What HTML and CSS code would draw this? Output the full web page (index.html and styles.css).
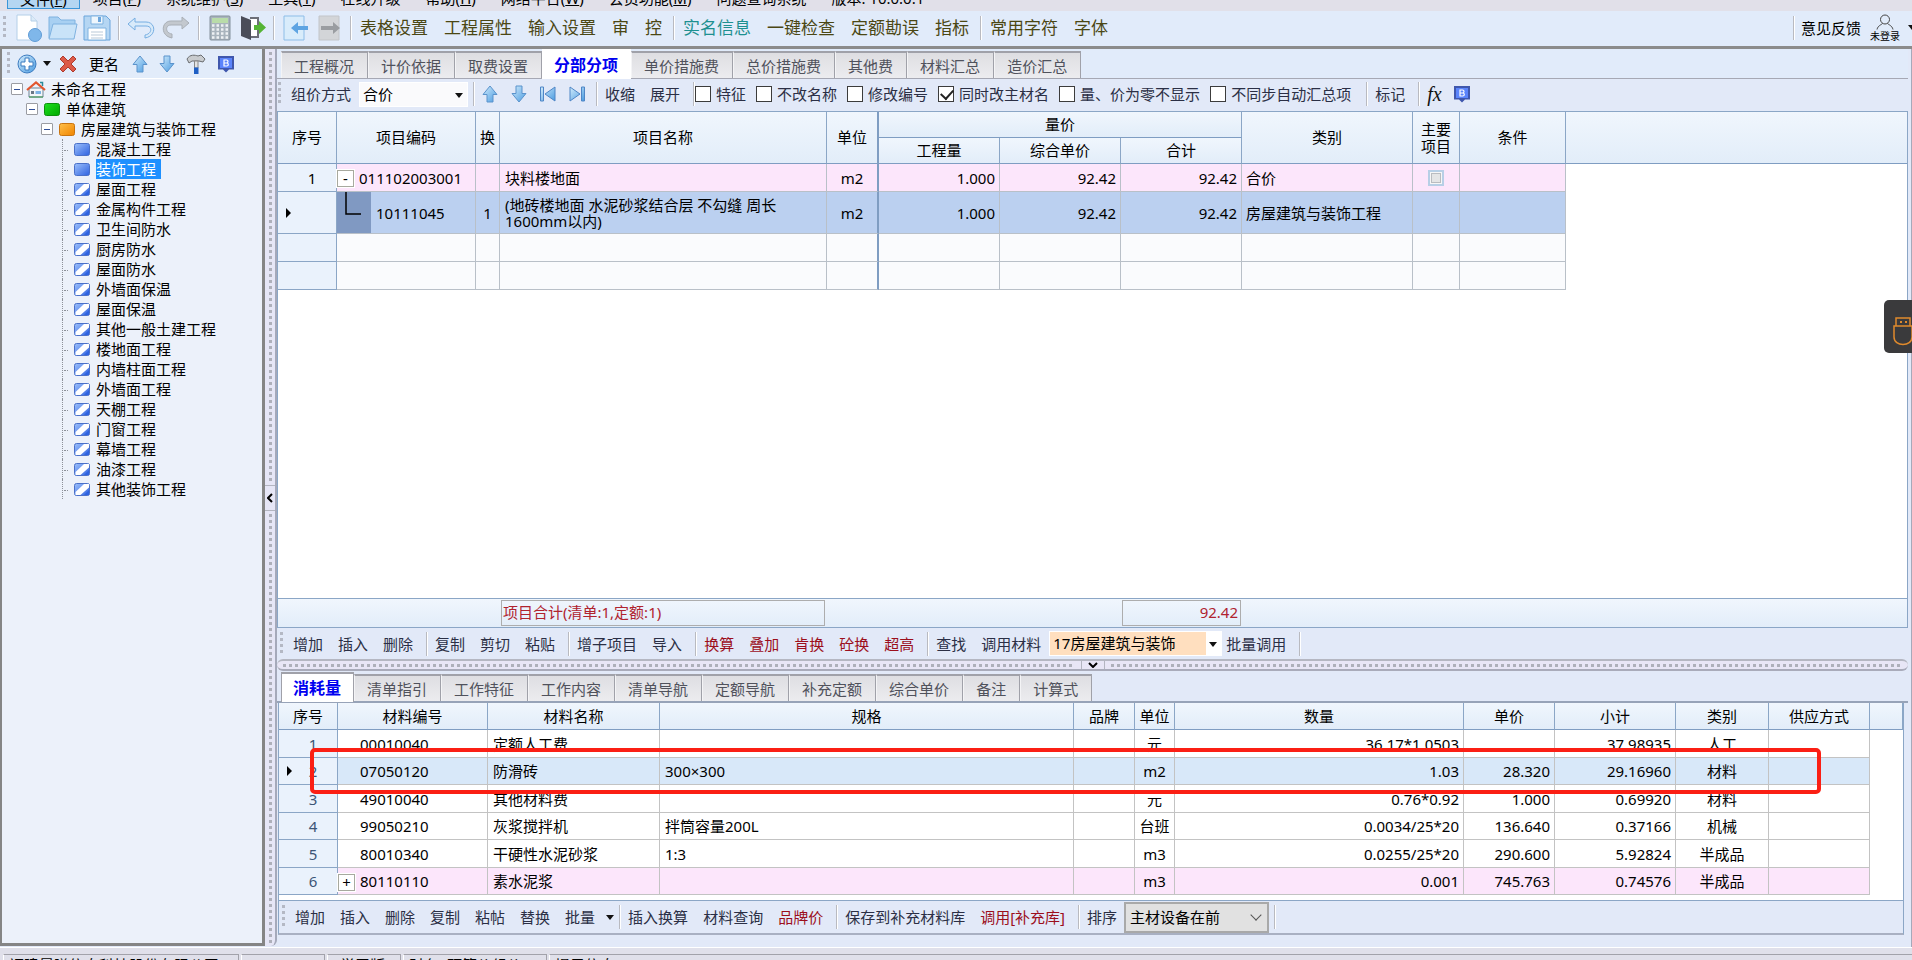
FILE: index.html
```html
<!DOCTYPE html>
<html lang="zh-CN">
<head>
<meta charset="utf-8">
<title>工程计价</title>
<link rel="stylesheet" href="styles.css">
</head>
<body>
<svg class="defs" aria-hidden="true">
  <defs>
    <linearGradient id="gBlue" x1="0" y1="0" x2="1" y2="1"><stop offset="0" stop-color="#d3ecfc"/><stop offset="1" stop-color="#4a9be0"/></linearGradient>
    <linearGradient id="gLeaf" x1="0" y1="0" x2="1" y2="1"><stop offset="0" stop-color="#9cc0fb"/><stop offset="1" stop-color="#2f62e0"/></linearGradient>
    <linearGradient id="gOrange" x1="0" y1="0" x2="1" y2="1"><stop offset="0" stop-color="#ffc04a"/><stop offset="1" stop-color="#f08400"/></linearGradient>
    <linearGradient id="gGreen" x1="0" y1="0" x2="1" y2="1"><stop offset="0" stop-color="#1fe01f"/><stop offset="1" stop-color="#00a800"/></linearGradient>
    <symbol id="up" viewBox="0 0 16 18"><path d="M8 1 15 9.500H11V17H5V9.500H1Z" fill="url(#gBlue)" stroke="#5b93cc"/></symbol>
    <symbol id="down" viewBox="0 0 16 18"><path d="M8 17 15 8.500H11V1H5V8.500H1Z" fill="url(#gBlue)" stroke="#5b93cc"/></symbol>
    <symbol id="first" viewBox="0 0 18 16"><path d="M1.500 1H4.500V15H1.500ZM16 1V15L6 8Z" fill="url(#gBlue)" stroke="#4f86c6"/></symbol>
    <symbol id="last" viewBox="0 0 18 16"><path d="M16.500 1H13.500V15H16.500ZM2 1V15L12 8Z" fill="url(#gBlue)" stroke="#4f86c6"/></symbol>
    <symbol id="badge" viewBox="0 0 18 18"><path d="M1 1H17V14.500H12L9 17.500 6 14.500H1Z" fill="#3f57ad"/><path d="M3 3H15V13H3Z" fill="#5b84fb"/><path d="M7 4.500V11.500M7 5H9.500a1.500 1.500 0 0 1 0 3H7M7 8H9.800a1.500 1.500 0 0 1 0 3H7" fill="none" stroke="#fff" stroke-width="1.200"/></symbol>
    <symbol id="leaf" viewBox="0 0 16 13"><rect x=".5" y=".5" width="15" height="12" rx="2" fill="url(#gLeaf)" stroke="#4a70c8"/></symbol>
    <symbol id="leafHalf" viewBox="0 0 16 13"><rect x=".5" y=".5" width="15" height="12" rx="2" fill="url(#gLeaf)" stroke="#4a70c8"/><path d="M10 1H15V4.500L6.500 12H1.500V9Z" fill="#fff"/><path d="M10 12 15 7V12Z" fill="#2f62e0"/></symbol>
  </defs>
</svg>

<nav class="menubar">
  <button class="menu menu-on">文件(<u>F</u>)</button>
  <button class="menu">项目(<u>P</u>)</button>
  <button class="menu">系统维护(<u>S</u>)</button>
  <button class="menu">工具(<u>T</u>)</button>
  <button class="menu">在线升级</button>
  <button class="menu">帮助(<u>H</u>)</button>
  <button class="menu">网络平台(<u>W</u>)</button>
  <button class="menu">会员功能(<u>M</u>)</button>
  <button class="menu">问题查询系统</button>
  <span class="menu">版本: 10.0.0.1</span>
</nav>

<header class="mainbar">
  <i class="grip"></i>
  <button class="ico" aria-label="新建"><svg width="28" height="30" viewBox="0 0 28 30"><path d="M2 2H16L22 8V27H2Z" fill="#fff" stroke="#b4cfe8"/><path d="M16 2V8H22" fill="#dcebf8" stroke="#b4cfe8"/><circle cx="20" cy="22" r="6.500" fill="#7fb7ea" stroke="#5f9bd6"/></svg></button>
  <button class="ico" aria-label="打开"><svg width="30" height="26" viewBox="0 0 30 26"><path d="M1 23V2H10L13 5H27V9" fill="#a8d0f2" stroke="#7fb2e0"/><path d="M1 24 5 9H29L26 24Z" fill="#c9e3f8" stroke="#7fb2e0"/></svg></button>
  <button class="ico" aria-label="保存"><svg width="28" height="26" viewBox="0 0 28 26"><path d="M1 1H23L27 5V25H1Z" fill="#b5d6f3" stroke="#6ba5dc"/><path d="M8 1H20V9H8Z" fill="#eef6fd" stroke="#7fb2e0"/><path d="M15 2H18V7H15Z" fill="#6ba5dc"/><path d="M5 13H23V25H5Z" fill="#fff" stroke="#7fb2e0"/><path d="M8 17H20M8 20H20M8 23H20" stroke="#b9c9d8"/></svg></button>
  <i class="sep"></i>
  <button class="ico" aria-label="撤销"><svg width="30" height="24" viewBox="0 0 30 24"><path d="M9 2 2 8 9 14V10H20C27 10 26 18 19 19V22C31 20 30 6 20 6H9Z" fill="#d8eafa" stroke="#76aee2"/></svg></button>
  <button class="ico" aria-label="重做"><svg width="30" height="24" viewBox="0 0 30 24"><path d="M21 1 28 7 21 13V9H10C4 9 4 17 11 18V22C-1 20 0 5 10 5H21Z" fill="#c3c8ce" stroke="#a9afb6"/></svg></button>
  <i class="sep"></i>
  <button class="ico narrow" aria-label="计算器"><svg width="22" height="26" viewBox="0 0 22 26"><rect x="1" y="1" width="20" height="24" rx="1" fill="#a9b4bd" stroke="#84919c"/><path d="M3 3H19V8H3Z" fill="#b9dca9"/><path d="M3 10.500H19M3 14.500H19M3 18.500H19M3 22.500H19" stroke="#eef1f4" stroke-width="2.500" stroke-dasharray="2.500 2"/></svg></button>
  <button class="ico narrow" aria-label="退出"><svg width="26" height="26" viewBox="0 0 26 26"><path d="M10 3H18V22H10" fill="#fff" stroke="#6c6f78" stroke-width="2"/><path d="M1 1 11 5V25L1 21Z" fill="#4a4d59"/><path d="M14 10H19V6L26 12.500 19 19V15H14Z" fill="#55b435"/></svg></button>
  <i class="sep"></i>
  <button class="ico doc" aria-label="导入"><svg width="26" height="26" viewBox="0 0 26 26"><path d="M1 1H21V25H1Z" fill="#d9ecfb" stroke="#8dbde8"/><path d="M25 11V15H15V19L8 13 15 7V11Z" fill="#5ea4e2"/></svg></button>
  <button class="ico doc" aria-label="导出"><svg width="24" height="26" viewBox="0 0 24 26"><path d="M1 1H21V25H1Z" fill="#d3d5d8" stroke="#c2c5c9"/><path d="M3 11V15H15V19L22 13 15 7V11Z" fill="#9a9da1"/></svg></button>
  <i class="sep"></i>
  <button class="big">表格设置</button><button class="big">工程属性</button><button class="big">输入设置</button><button class="big">审</button><button class="big">控</button>
  <i class="sep"></i>
  <button class="big teal">实名信息</button><button class="big">一键检查</button><button class="big">定额勘误</button><button class="big">指标</button>
  <i class="sep"></i>
  <button class="big">常用字符</button><button class="big">字体</button>
  <span class="spring"></span>
  <i class="sep"></i>
  <button class="btn dark">意见反馈</button>
  <button class="user"><svg width="18" height="16" viewBox="0 0 18 16"><circle cx="9" cy="5.500" r="4.500" fill="none" stroke="#444"/><path d="M1 15.500C2 11.500 5 11 6.500 9.500M17 15.500C16 11.500 13 11 11.500 9.500" fill="none" stroke="#444"/></svg><span>未登录</span></button>
  <i class="tri"></i>
</header>

<main class="work">
  <aside class="side">
    <div class="sidebar-tools">
      <i class="grip"></i>
      <button class="pic" aria-label="添加"><svg width="20" height="20" viewBox="0 0 20 20"><circle cx="10" cy="10" r="9" fill="url(#gBlue)" stroke="#3d7cc0"/><path d="M8 4H12V8H16V12H12V16H8V12H4V8H8Z" fill="#fff" stroke="#3d7cc0"/></svg></button>
      <i class="tri"></i>
      <button class="pic" aria-label="删除"><svg width="18" height="18" viewBox="0 0 18 18"><path d="M4 1 9 6 14 1 17 4 12 9 17 14 14 17 9 12 4 17 1 14 6 9 1 4Z" fill="#dc5a48" stroke="#b03a2c"/></svg></button>
      <button class="btn dark">更名</button>
      <button class="pic" aria-label="上移"><svg width="16" height="18"><use href="#up"/></svg></button>
      <button class="pic" aria-label="下移"><svg width="16" height="18"><use href="#down"/></svg></button>
      <button class="pic" aria-label="工具"><svg width="20" height="20" viewBox="0 0 20 20"><path d="M1 5C4 0 9 1 12 2L15 1 19 5 17 8 13 7H6L3 9Z" fill="#c9cccf" stroke="#6a6d70"/><path d="M8.500 7H12V14H8.500Z" fill="#e3e3e3" stroke="#888"/><path d="M8 13.500H12.500V20H8Z" fill="#1f5fc4"/></svg></button>
      <button class="pic" aria-label="标注"><svg width="18" height="18"><use href="#badge"/></svg></button>
    </div>
    <ul class="tree">
      <li class="d0"><button class="twist" aria-label="折叠"></button><svg width="20" height="17" viewBox="0 0 20 17"><path d="M3 7H17V16H3Z" fill="#f4f6f8" stroke="#6a8396"/><path d="M1 9 10 1.500 19 9" fill="none" stroke="#e2552e" stroke-width="2.200"/><path d="M14 1.500H16.500V5" stroke="#2a8a9a" stroke-width="1.500" fill="none"/><path d="M5 10H8V13H5Z" fill="#6a7784"/><path d="M9.500 10H15V13H9.500Z" fill="#7db3e4"/><path d="M3 16H17" stroke="#3c9a4a"/></svg><span>未命名工程</span></li>
      <li class="d1"><button class="twist" aria-label="折叠"></button><svg width="16" height="13" viewBox="0 0 16 13"><rect x=".5" y=".5" width="15" height="12" rx="2" fill="url(#gGreen)" stroke="#0c8f0c"/></svg><span>单体建筑</span></li>
      <li class="d2"><button class="twist" aria-label="折叠"></button><svg width="16" height="13" viewBox="0 0 16 13"><rect x=".5" y=".5" width="15" height="12" rx="2" fill="url(#gOrange)" stroke="#c87410"/></svg><span>房屋建筑与装饰工程</span></li>
      <li class="d3"><svg width="16" height="13"><use href="#leaf"/></svg><span>混凝土工程</span></li>
      <li class="d3 picked"><svg width="16" height="13"><use href="#leaf"/></svg><span>装饰工程</span></li>
      <li class="d3"><svg width="16" height="13"><use href="#leafHalf"/></svg><span>屋面工程</span></li>
      <li class="d3"><svg width="16" height="13"><use href="#leafHalf"/></svg><span>金属构件工程</span></li>
      <li class="d3"><svg width="16" height="13"><use href="#leafHalf"/></svg><span>卫生间防水</span></li>
      <li class="d3"><svg width="16" height="13"><use href="#leafHalf"/></svg><span>厨房防水</span></li>
      <li class="d3"><svg width="16" height="13"><use href="#leafHalf"/></svg><span>屋面防水</span></li>
      <li class="d3"><svg width="16" height="13"><use href="#leafHalf"/></svg><span>外墙面保温</span></li>
      <li class="d3"><svg width="16" height="13"><use href="#leafHalf"/></svg><span>屋面保温</span></li>
      <li class="d3"><svg width="16" height="13"><use href="#leafHalf"/></svg><span>其他一般土建工程</span></li>
      <li class="d3"><svg width="16" height="13"><use href="#leafHalf"/></svg><span>楼地面工程</span></li>
      <li class="d3"><svg width="16" height="13"><use href="#leafHalf"/></svg><span>内墙柱面工程</span></li>
      <li class="d3"><svg width="16" height="13"><use href="#leafHalf"/></svg><span>外墙面工程</span></li>
      <li class="d3"><svg width="16" height="13"><use href="#leafHalf"/></svg><span>天棚工程</span></li>
      <li class="d3"><svg width="16" height="13"><use href="#leafHalf"/></svg><span>门窗工程</span></li>
      <li class="d3"><svg width="16" height="13"><use href="#leafHalf"/></svg><span>幕墙工程</span></li>
      <li class="d3"><svg width="16" height="13"><use href="#leafHalf"/></svg><span>油漆工程</span></li>
      <li class="d3"><svg width="16" height="13"><use href="#leafHalf"/></svg><span>其他装饰工程</span></li>
    </ul>
  </aside>

  <div class="vsplit">
    <i class="vdots"></i>
    <button class="vhandle" aria-label="收起"><svg width="6" height="10" viewBox="0 0 6 10"><path d="M5 1 1 5 5 9" fill="none" stroke="#000" stroke-width="2"/></svg></button>
    <i class="vdots"></i>
  </div>

  <section class="content">
    <nav class="tabs">
      <button class="tab">工程概况</button><button class="tab">计价依据</button><button class="tab">取费设置</button><button class="tab tab-on">分部分项</button><button class="tab">单价措施费</button><button class="tab">总价措施费</button><button class="tab">其他费</button><button class="tab">材料汇总</button><button class="tab">造价汇总</button>
    </nav>

    <div class="bar bar-top">
      <i class="grip"></i>
      <label class="lbl" for="mode">组价方式</label>
      <span class="combo combo-mode"><select id="mode"><option>合价</option></select></span>
      <i class="sep"></i>
      <button class="nav" aria-label="上移"><svg width="16" height="18"><use href="#up"/></svg></button>
      <button class="nav" aria-label="下移"><svg width="16" height="18"><use href="#down"/></svg></button>
      <button class="nav" aria-label="首条"><svg width="18" height="16"><use href="#first"/></svg></button>
      <button class="nav" aria-label="末条"><svg width="18" height="16"><use href="#last"/></svg></button>
      <i class="sep"></i>
      <button class="btn">收缩</button><button class="btn">展开</button>
      <i class="sep"></i>
      <label class="chk"><input type="checkbox">特征</label>
      <label class="chk"><input type="checkbox">不改名称</label>
      <label class="chk"><input type="checkbox">修改编号</label>
      <label class="chk"><input type="checkbox" checked>同时改主材名</label>
      <label class="chk"><input type="checkbox">量、价为零不显示</label>
      <label class="chk"><input type="checkbox">不同步自动汇总项</label>
      <i class="sep"></i>
      <button class="btn">标记</button>
      <i class="sep"></i>
      <button class="fx"><i>fx</i></button>
      <button class="pic" aria-label="标注"><svg width="18" height="18"><use href="#badge"/></svg></button>
    </div>

    <div class="sheet">
      <table class="grid items">
        <colgroup><col class="w59"><col class="w139"><col class="w24"><col class="w327"><col class="w52"><col class="w121"><col class="w121"><col class="w121"><col class="w171"><col class="w47"><col class="w106"><col></colgroup>
        <thead>
          <tr><th rowspan="2">序号</th><th rowspan="2">项目编码</th><th rowspan="2">换</th><th rowspan="2">项目名称</th><th rowspan="2" class="thick">单位</th><th colspan="3">量价</th><th rowspan="2">类别</th><th rowspan="2">主要<br>项目</th><th rowspan="2">条件</th><th rowspan="2" class="last"></th></tr>
          <tr><th>工程量</th><th>综合单价</th><th>合计</th></tr>
        </thead>
        <tbody>
          <tr class="pink"><td class="no">1</td><td class="code"><button class="pm">-</button>011102003001</td><td></td><td>块料楼地面</td><td class="mid thick">m2</td><td class="num">1.000</td><td class="num">92.42</td><td class="num">92.42</td><td class="tight">合价</td><td class="mid"><input type="checkbox" class="flat" aria-label="主要项目"></td><td></td><td class="fill"></td></tr>
          <tr class="sel"><td class="no"><i class="cur"></i></td><td class="code child"><i class="elbow"><svg width="34" height="41" viewBox="0 0 34 41"><path d="M9 0V22H24" fill="none" stroke="#000" stroke-width="1.500"/></svg></i>10111045</td><td class="mid">1</td><td class="wrap">(地砖楼地面 水泥砂浆结合层 不勾缝 周长1600mm以内)</td><td class="mid thick">m2</td><td class="num">1.000</td><td class="num">92.42</td><td class="num">92.42</td><td class="tight">房屋建筑与装饰工程</td><td></td><td></td><td class="fill"></td></tr>
          <tr><td class="no"></td><td></td><td></td><td></td><td class="thick"></td><td></td><td></td><td></td><td></td><td></td><td></td><td class="fill"></td></tr>
          <tr><td class="no"></td><td></td><td></td><td></td><td class="thick"></td><td></td><td></td><td></td><td></td><td></td><td></td><td class="fill"></td></tr>
        </tbody>
      </table>
    </div>
    <div class="sums"><output class="sum-name">项目合计(清单:1,定额:1)</output><output class="sum-total">92.42</output></div>

    <div class="bar bar-mid">
      <i class="grip"></i>
      <button class="btn">增加</button><button class="btn">插入</button><button class="btn">删除</button><i class="sep"></i>
      <button class="btn">复制</button><button class="btn">剪切</button><button class="btn">粘贴</button><i class="sep"></i>
      <button class="btn">增子项目</button><button class="btn">导入</button><i class="sep"></i>
      <button class="btn red">换算</button><button class="btn red">叠加</button><button class="btn red">肯换</button><button class="btn red">砼换</button><button class="btn red">超高</button><i class="sep"></i>
      <button class="btn">查找</button><label class="lbl" for="lib">调用材料</label>
      <span class="combo combo-lib"><select id="lib"><option>17房屋建筑与装饰</option></select></span>
      <button class="btn snug">批量调用</button><i class="sep"></i>
    </div>

    <div class="hsplit"><i class="hdots"></i><button class="hhandle" aria-label="收起"><svg width="10" height="6" viewBox="0 0 10 6"><path d="M1 1 5 5 9 1" fill="none" stroke="#000" stroke-width="2"/></svg></button><i class="hdots"></i></div>

    <nav class="tabs tabs-low">
      <button class="tab tab-on">消耗量</button><button class="tab">清单指引</button><button class="tab">工作特征</button><button class="tab">工作内容</button><button class="tab">清单导航</button><button class="tab">定额导航</button><button class="tab">补充定额</button><button class="tab">综合单价</button><button class="tab">备注</button><button class="tab">计算式</button>
    </nav>

    <div class="lower">
      <div class="marked">
        <table class="grid mats">
          <colgroup><col class="w59"><col class="w150"><col class="w172"><col><col class="w61"><col class="w40"><col class="w289"><col class="w91"><col class="w121"><col class="w93"><col class="w101"><col class="w33"></colgroup>
          <thead><tr><th>序号</th><th>材料编号</th><th>材料名称</th><th>规格</th><th>品牌</th><th>单位</th><th>数量</th><th>单价</th><th>小计</th><th>类别</th><th>供应方式</th><th></th></tr></thead>
          <tbody>
            <tr><td class="no">1</td><td class="code">00010040</td><td>定额人工费</td><td></td><td></td><td class="mid">元</td><td class="num">36.17*1.0503</td><td class="num"></td><td class="num">37.98935</td><td class="mid">人工</td><td></td><td class="fill"></td></tr>
            <tr class="hot"><td class="no"><i class="cur"></i>2</td><td class="code">07050120</td><td>防滑砖</td><td>300×300</td><td></td><td class="mid">m2</td><td class="num">1.03</td><td class="num">28.320</td><td class="num">29.16960</td><td class="mid">材料</td><td></td><td class="fill"></td></tr>
            <tr><td class="no">3</td><td class="code">49010040</td><td>其他材料费</td><td></td><td></td><td class="mid">元</td><td class="num">0.76*0.92</td><td class="num">1.000</td><td class="num">0.69920</td><td class="mid">材料</td><td></td><td class="fill"></td></tr>
            <tr><td class="no">4</td><td class="code">99050210</td><td>灰浆搅拌机</td><td>拌筒容量200L</td><td></td><td class="mid">台班</td><td class="num">0.0034/25*20</td><td class="num">136.640</td><td class="num">0.37166</td><td class="mid">机械</td><td></td><td class="fill"></td></tr>
            <tr><td class="no">5</td><td class="code">80010340</td><td>干硬性水泥砂浆</td><td>1:3</td><td></td><td class="mid">m3</td><td class="num">0.0255/25*20</td><td class="num">290.600</td><td class="num">5.92824</td><td class="mid">半成品</td><td></td><td class="fill"></td></tr>
            <tr class="pink"><td class="no">6</td><td class="code"><button class="pm">+</button>80110110</td><td>素水泥浆</td><td></td><td></td><td class="mid">m3</td><td class="num">0.001</td><td class="num">745.763</td><td class="num">0.74576</td><td class="mid">半成品</td><td></td><td class="fill"></td></tr>
          </tbody>
        </table>
        <div class="mark"></div>
      </div>
      <div class="bar bar-low">
        <i class="grip"></i>
        <button class="btn">增加</button><button class="btn">插入</button><button class="btn">删除</button><button class="btn">复制</button><button class="btn">粘帖</button><button class="btn">替换</button><button class="btn">批量</button><i class="tri"></i><i class="sep"></i>
        <button class="btn">插入换算</button><button class="btn">材料查询</button><button class="btn red">品牌价</button><i class="sep"></i>
        <button class="btn">保存到补充材料库</button><button class="btn red">调用[补充库]</button><i class="sep"></i>
        <label class="lbl" for="sort">排序</label>
        <span class="pick"><select id="sort"><option>主材设备在前</option></select></span>
        <i class="sep"></i>
      </div>
    </div>
  </section>
</main>

<footer class="status"><span class="cell c1">福建晨曦信息科技股份有限公司</span><span class="cell c2">xmb</span><span class="cell c3">学习版</span><span class="cell c4">财务: 预算价组价</span><span class="cell c5">提示信息</span></footer>

<button class="float" aria-label="加密锁"><svg width="20" height="32" viewBox="0 0 20 32"><path d="M4 10V2H18V10" fill="none" stroke="#e08a2c" stroke-width="1.500"/><path d="M8 5H10V7H8ZM13 5H15V7H13Z" fill="#e08a2c"/><path d="M2 10H20V21C20 31 2 31 2 21Z" fill="none" stroke="#e08a2c" stroke-width="1.500"/></svg></button>
</body>
</html>
```
FILE: styles.css
```css
* { box-sizing: border-box; }
body {
  margin: 0; height: 100vh; overflow: hidden; position: relative;
  display: flex; flex-direction: column;
  font: 15px/20px "Noto Sans", "Noto Sans CJK SC", sans-serif;
  color: #000; background: #e1ebfa;
}
button, select, input { font: inherit; color: inherit; margin: 0; }
button { background: none; border: 0; padding: 0; white-space: nowrap; }
svg { display: block; }
.defs { position: absolute; width: 0; height: 0; }

/* menu strip */
.menubar { flex: 0 0 11px; overflow: hidden; background: #e1e0e9; display: flex; align-items: flex-end; gap: 1px; padding: 0 7px 2px; }
.menu { height: 22px; line-height: 22px; padding: 0 12px; flex: none; }
.menu-on { background: #b4d6f2; border: 1px solid #3b96d9; }

/* shared toolbar parts */
.grip { flex: none; width: 3px; height: 24px; margin: 0 3px; background: repeating-linear-gradient(#b4b8c4 0 3px, transparent 3px 6px); }
.sep { flex: none; width: 2px; height: 24px; margin-left: 5px; background: linear-gradient(90deg, #b9bac0 50%, #fff 50%); }
.tri { flex: none; border: 4px solid transparent; border-top: 5px solid #111; border-bottom: 0; }
.btn { padding: 0 8px 0 7px; color: #2b2f45; line-height: 24px; }
.dark { color: #000; }
.red { color: #9c0f1c; }
.lbl { padding: 0 8px 0 7px; color: #2b2f45; white-space: nowrap; }
.spring { flex: 1; }

.mainbar { flex: 0 0 38px; display: flex; align-items: center; padding-bottom: 2px; border-bottom: 3px solid #8b8b8b; background: #e1ebfa; }
.ico { padding: 0 0 0 6px; }
.ico + .ico { padding-left: 5px; }
.ico + .sep { margin-left: 7px; }
.ico.narrow { padding: 0 0 0 9px; }
.ico.doc { padding: 0 1px 0 8px; }
.big { font-size: 17px; padding: 0 8px; color: #4b4713; }
.big + .sep { margin-left: 3px; }
.teal { color: #1d9090; }
.mainbar .btn { padding: 0 9px 0 6px; }
.user { width: 30px; display: flex; flex-direction: column; align-items: center; font-size: 10px; line-height: 12px; margin-right: 8px; }
.mainbar > .tri { margin-right: -4px; }

.work { flex: 1; min-height: 0; display: flex; background: #e2e9f8; }

/* project tree */
.side { flex: 0 0 265px; border: 3px solid #858585; border-top: 0; border-left-width: 2px; background: #ecf1fa; margin-bottom: 1px; }
.sidebar-tools { height: 30px; display: flex; align-items: center; background: #e2ecfa; border-bottom: 1px solid #fff; padding-left: 2px; }
.sidebar-tools .grip { margin-right: 5px; }
.sidebar-tools .pic { padding: 0 5px 0 6px; }
.sidebar-tools .btn { padding: 0 7px; }
.sidebar-tools > .tri { margin: 0 2px 0 1px; }
.sidebar-tools .pic:first-of-type { padding: 0 5px 0 2px; }
.tree { list-style: none; margin: 0; padding: 0; }
.tree li { height: 20px; display: flex; align-items: center; position: relative; }
.tree li svg { flex: none; margin-right: 6px; }
.tree span { line-height: 20px; padding-right: 5px; }
.d0 { padding-left: 9px; }
.d1 { padding-left: 24px; }
.d2 { padding-left: 39px; }
.d3 { padding-left: 72px; }
.d3::before { content: ""; position: absolute; left: 60px; top: 0; width: 4px; height: 20px; border-left: 1px dotted #8d9199; }
.d3::after { content: ""; position: absolute; left: 62px; top: 11px; width: 4px; border-top: 1px dotted #8d9199; }
.twist { width: 12px; height: 12px; flex: none; margin-right: 6px; border: 1px solid #9a9ca2; border-radius: 1px; background: linear-gradient(#2f4f9a, #2f4f9a) center / 6px 1px no-repeat #fff; }
.d0 .twist { margin-right: 3px; }
.d0 svg { width: 20px; }
.d0 span { margin-left: -1px; }
.picked span { background: #1e90ff; color: #fff; }

/* splitters */
.vsplit { flex: 0 0 12px; display: flex; flex-direction: column; align-items: center; background: #e6e6f6; border-right: 2px solid #a5a9ba; border-radius: 4px 0 6px 0; margin-bottom: 1px; }
.vdots { width: 3px; flex: 1; margin: 3px 0; background: repeating-linear-gradient(#aeb0ba 0 3px, transparent 3px 6px); }
.vhandle { height: 26px; width: 10px; display: grid; place-items: center; border: 1px solid #b3b5c0; border-width: 1px 0; }
.hsplit { flex: 0 0 10px; display: flex; align-items: center; background: #e8e6f6; border-top: 2px solid #b5b7c2; border-bottom: 2px solid #a9abba; border-radius: 6px; }
.hdots { height: 3px; flex: 1; margin: 0 6px; background: repeating-linear-gradient(90deg, #aeb0ba 0 3px, transparent 3px 6px); }
.hhandle { width: 24px; height: 8px; display: grid; place-items: center; border: 1px solid #b3b5c0; border-width: 0 1px; }

.content { flex: 1; min-width: 0; display: flex; flex-direction: column; padding: 0 3px 12px 0; border-right: 1px solid #a5a9ba; }

/* tabs */
.tabs { flex: 0 0 30px; display: flex; align-items: flex-end; padding-left: 4px; border-bottom: 1px solid #a6a8b4; background: #e1ebfa; }
.tab { height: 27px; padding: 0 13px 0 12px; color: #50525c; background: linear-gradient(#dedee2, #ececef); border: 1px solid #a0a1a9; border-top-width: 2px; border-bottom: 0; border-left-color: #f4f4f6; line-height: 24px; }
.tab-on { height: 30px; padding: 0 12px 0 11px; margin-bottom: -1px; background: #fff; color: #0000f0; font-weight: bold; font-size: 16px; border-color: #fff; }
.tabs-low { flex-basis: 32px; background: #e2e9f8; border-bottom: 2px solid #97a3b8; }
.tabs-low .tab-on { border-color: #a0a1a9; }

/* toolbars over and under the sheets */
.bar { flex: none; height: 32px; display: flex; align-items: center; background: #e2e9f8; }
.bar-top { padding-bottom: 2px; }
.bar-mid { height: 31px; }
.bar > .grip { margin-left: 3px; }
.bar-top > .grip { margin-left: 1px; }
.combo { position: relative; height: 25px; border: 1px solid #fff; background: #fafafc; }
.combo select { appearance: none; border: 0; background: none; width: 100%; height: 23px; padding: 0 3px; line-height: 23px; outline: 0; }
.combo::after { content: ""; position: absolute; right: 4px; top: 10px; border: 4px solid transparent; border-top: 5px solid #111; border-bottom: 0; }
.combo-mode { width: 109px; }
.combo-lib { width: 173px; background: linear-gradient(90deg, #ffdfbf 156px, #fff 156px); }
.snug { padding-left: 4px; }
.nav { width: 29px; display: grid; place-items: center; }
.chk { display: flex; align-items: center; gap: 5px; margin-right: 10px; color: #2b2f45; white-space: nowrap; }
.chk input { appearance: none; width: 16px; height: 16px; border: 1px solid #3c3c3c; background: #fff; position: relative; }
.chk input:checked::after { content: ""; position: absolute; left: 4px; top: 0; width: 6px; height: 10px; border: solid #222; border-width: 0 2px 2px 0; transform: rotate(42deg); }
.fx { font: 20px/24px "Liberation Serif", serif; padding: 0 11px 0 7px; color: #111; }

/* sheets */
.sheet { flex: 1; min-height: 0; background: #fff; border: 1px solid #8ba6c6; overflow: hidden; }
.grid { width: 100%; table-layout: fixed; border-collapse: separate; border-spacing: 0; }
.grid th { font-weight: normal; padding: 0; line-height: 17px; background: linear-gradient(#f0f6fd, #e2edf9); border-right: 1px solid #8ba6c6; border-bottom: 1px solid #7f9dc2; }
.grid td { padding: 0 5px; border-right: 1px solid #b9c0c8; border-bottom: 1px solid #b9c0c8; white-space: nowrap; background: #fafbfd; line-height: 16px; }
.grid .no { text-align: center; background: #eaf2fc; border-color: #8ba6c6; position: relative; padding-left: 15px; }
.grid .mid { text-align: center; padding: 0; }
.grid .num { text-align: right; padding: 0 4px; }
.grid .tight { padding-left: 4px; }
.grid .thick { border-right: 2px solid #7f9dc2; }
.grid .fill { border: 0; background: #fff; }
.grid th.last { border-right: 0; }
.grid td.wrap { white-space: normal; padding-right: 30px; }
.grid td.code { padding-left: 22px; position: relative; }
.grid td.child { padding-left: 39px; }
.pink td:not(.no):not(.fill) { background: #fce6fb; }
.sel td:not(.no):not(.fill) { background: #bbd0f0; }
.hot td:not(.no):not(.fill) { background: #d8e8f9; }
.cur { position: absolute; left: 8px; top: 50%; margin-top: -5px; border: 5px solid transparent; border-left-color: #000; border-right: 0; }
.pm { position: absolute; left: 0; top: 6px; width: 17px; height: 17px; line-height: 13px; background: #fff; border: 1px solid #a7a99f; box-shadow: 0 0 0 1px #fff; }
.elbow { position: absolute; left: 0; top: 0; bottom: 0; width: 34px; background: #8099c2; overflow: hidden; }
.flat { appearance: none; display: inline-block; vertical-align: middle; width: 16px; height: 16px; border: 2px solid #b7cfe6; background: #e4e5e6; box-shadow: inset 0 0 0 1px #f6f6f6, inset 0 0 0 2px #b9bcc0; }
.items tr { height: 28px; }
.items thead tr { height: 26px; }
.items tr.sel { height: 42px; }
.mats { background: #fff; }
.mats thead tr, .mats tbody tr:nth-child(even) { height: 27px; }
.mats tbody tr:nth-child(odd) { height: 28px; }
.mats .no { color: #3c5576; }
.mats td { background: #fff; border-color: #c3c3c3; }

.w24 { width: 24px; } .w33 { width: 33px; } .w40 { width: 40px; } .w47 { width: 47px; }
.w52 { width: 52px; } .w59 { width: 59px; } .w61 { width: 61px; } .w91 { width: 91px; }
.w93 { width: 93px; } .w101 { width: 101px; } .w106 { width: 106px; } .w121 { width: 121px; }
.w139 { width: 139px; } .w150 { width: 150px; } .w171 { width: 171px; }
.w172 { width: 172px; } .w289 { width: 289px; } .w327 { width: 327px; }

.sums { flex: 0 0 29px; display: flex; align-items: center; padding-left: 223px; background: linear-gradient(#f0f6fd, #e2edf9); border: 1px solid #8ba6c6; border-top: 0; color: #b0232f; }
.sums output { height: 26px; line-height: 23px; border: 1px solid #adadad; }
.sum-name { width: 324px; padding-left: 1px; margin-right: 297px; }
.sum-total { width: 119px; text-align: right; padding-right: 2px; }

.lower { flex: none; margin: 0 4px 0 1px; border: 1px solid #8ba6c6; border-top: 0; border-bottom: 2px solid #a9b0c2; }
.marked { position: relative; background: #fff; padding-bottom: 5px; border-bottom: 1px solid #8ba6c6; }
.mark { position: absolute; left: 31px; right: 82px; top: 45px; height: 46px; border: 4px solid #fb1f14; border-radius: 5px; }
.bar-low > .tri { margin: 0 0 0 3px; }
.pick { position: relative; margin-left: -1px; }
.pick select { appearance: none; width: 145px; height: 31px; padding: 0 4px; border: 2px solid #a9a9a9; border-radius: 0; background: #e1e1e1; }
.pick::after { content: ""; position: absolute; right: 9px; top: 9px; width: 7px; height: 7px; border: solid #555; border-width: 0 1px 1px 0; transform: rotate(45deg); }

/* status strip */
.status { flex: 0 0 13px; overflow: hidden; display: flex; gap: 2px; padding: 6px 0 0 3px; background: #e0e0ea; border-top: 1px solid #fff; }
.cell { flex: none; height: 22px; padding-left: 5px; border: 1px solid #a2a2aa; border-left-color: #fff; white-space: nowrap; overflow: hidden; }
.c1 { width: 236px; } .c2 { width: 84px; } .c3 { width: 74px; padding-left: 12px; } .c4 { width: 144px; }
.c5 { flex: 1; border-right: 0; }

.float { position: absolute; right: 0; top: 300px; width: 28px; height: 53px; background: #3a3a3c; border-radius: 5px 0 0 5px; padding: 10px 0 0 8px; overflow: hidden; }
```
